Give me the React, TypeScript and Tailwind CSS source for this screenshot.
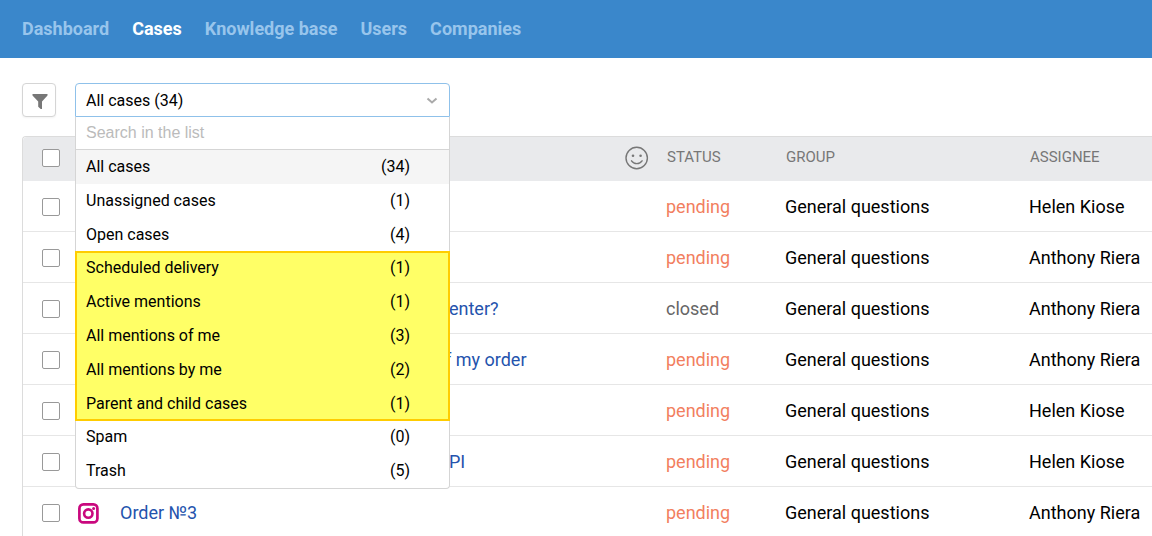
import { useState } from "react";
import clsx from "clsx";

const NAV = ["Dashboard", "Cases", "Knowledge base", "Users", "Companies"];

type Filter = { label: string; count: number };

const MAIN_FILTERS: Filter[] = [
  { label: "All cases", count: 34 },
  { label: "Unassigned cases", count: 1 },
  { label: "Open cases", count: 4 },
];

const MARKED_FILTERS: Filter[] = [
  { label: "Scheduled delivery", count: 1 },
  { label: "Active mentions", count: 1 },
  { label: "All mentions of me", count: 3 },
  { label: "All mentions by me", count: 2 },
  { label: "Parent and child cases", count: 1 },
];

const OTHER_FILTERS: Filter[] = [
  { label: "Spam", count: 0 },
  { label: "Trash", count: 5 },
];

type Case = { subject: string; indent?: string; status: "pending" | "closed"; assignee: string; instagram?: boolean };

const CASES: Case[] = [
  { subject: "", status: "pending", assignee: "Helen Kiose" },
  { subject: "", status: "pending", assignee: "Anthony Riera" },
  { subject: "enter?", indent: "pl-[329px]", status: "closed", assignee: "Anthony Riera" },
  { subject: "f my order", indent: "pl-[325px]", status: "pending", assignee: "Anthony Riera" },
  { subject: "", status: "pending", assignee: "Helen Kiose" },
  { subject: "PI", indent: "pl-[329px]", status: "pending", assignee: "Helen Kiose" },
  { subject: "Order №3", status: "pending", assignee: "Anthony Riera", instagram: true },
];

function FunnelIcon() {
  return (
    <svg viewBox="0 0 16 16" className="h-4 w-4" fill="#777" aria-hidden>
      <path d="M0.500 1h15v1.500L10 8.500V16H8.700L6.200 13.800V8.500L0.500 2.500z" />
    </svg>
  );
}

function ChevronIcon() {
  return (
    <svg viewBox="0 0 12 8" className="h-2 w-3" fill="none" stroke="#aaa" strokeWidth="2" aria-hidden>
      <path d="M1.500 1.500l4.500 4 4.500-4" />
    </svg>
  );
}

function SmileIcon() {
  return (
    <svg viewBox="0 0 24 24" className="h-6 w-6" fill="none" stroke="#777" strokeWidth="1.4" aria-hidden>
      <circle cx="11.700" cy="12" r="10.700" />
      <circle cx="8" cy="9.700" r="1.300" fill="#777" stroke="none" />
      <circle cx="15.600" cy="9.700" r="1.300" fill="#777" stroke="none" />
      <path d="M6.500 14.800c1.200 1.800 3 2.800 5.300 2.800s4.100-1 5.300-2.800" strokeLinecap="round" />
    </svg>
  );
}

function InstagramIcon() {
  return (
    <svg viewBox="0 0 21 21" className="h-[21px] w-[21px]" fill="none" stroke="#c9087e" aria-hidden>
      <rect x="1.400" y="1.400" width="18" height="18" rx="4" strokeWidth="2.700" />
      <circle cx="10.300" cy="10.600" r="4.200" strokeWidth="2.600" />
      <circle cx="15.600" cy="5.400" r="1.500" fill="#c9087e" stroke="none" />
    </svg>
  );
}

function Checkbox({ label }: { label: string }) {
  return (
    <input
      type="checkbox"
      aria-label={label}
      className="block h-[18px] w-[18px] appearance-none rounded-[2px] border border-[#999] bg-white checked:bg-[#3a87cb]"
    />
  );
}

function FilterRow({ filter, active, onSelect }: { filter: Filter; active: boolean; onSelect: (f: Filter) => void }) {
  return (
    <li>
      <button
        type="button"
        onClick={() => onSelect(filter)}
        className={clsx("flex h-[34px] w-full items-center justify-between pr-[39px] pl-[10px] text-left", active && "bg-[#f5f5f5]")}
      >
        <span>{filter.label}</span>
        <span>({filter.count})</span>
      </button>
    </li>
  );
}

function CaseFilter() {
  const [selected, setSelected] = useState(MAIN_FILTERS[0]);
  const rows = (filters: Filter[]) =>
    filters.map((f) => <FilterRow key={f.label} filter={f} active={f.label === selected.label} onSelect={setSelected} />);

  return (
    <div className="relative w-[375px] text-base text-black">
      <button
        type="button"
        aria-expanded="true"
        className="flex h-[34px] w-full items-center justify-between rounded-t border border-[#8fc1ea] bg-white pt-px pr-[11px] pl-[10px]"
      >
        <span>{selected.label} ({selected.count})</span>
        <ChevronIcon />
      </button>
      <div className="absolute top-full left-0 z-10 w-full rounded-b border border-t-0 border-[#d5d5d5] bg-white">
        <input
          type="text"
          aria-label="Search in the list"
          placeholder="Search in the list"
          className="block h-[33px] w-full border-b border-[#d5d5d5] px-[10px] font-['Liberation_Sans',sans-serif] outline-none placeholder:text-[#bbb]"
        />
        <ul>{rows(MAIN_FILTERS)}</ul>
        <ul className="-m-px bg-[#ffff66] px-px inset-ring-2 inset-ring-[#fc0]">{rows(MARKED_FILTERS)}</ul>
        <ul>{rows(OTHER_FILTERS)}</ul>
      </div>
    </div>
  );
}

function CaseTable() {
  return (
    <table className="w-full min-w-[1130px] table-fixed border-separate border-spacing-0 rounded-tl border-t border-l border-[#dcdcdc] text-left text-lg text-black">
      <thead>
        <tr className="h-11 bg-[#e9eaec] text-[15px] text-[#777] *:pb-0.5">
          <th className="w-[55px] rounded-tl pl-[19px]"><Checkbox label="Select all cases" /></th>
          <th className="w-[42px]" />
          <th className="w-[505px]" />
          <th className="w-[41px]"><SmileIcon /></th>
          <th className="w-[119px] pl-px font-normal">STATUS</th>
          <th className="w-[244px] pl-px font-normal">GROUP</th>
          <th className="pl-px font-normal">ASSIGNEE</th>
        </tr>
      </thead>
      <tbody>
        {CASES.map((c, i) => (
          <tr key={i} className="h-[51px] *:border-b *:border-[#e6e6e6] *:pt-0.5">
            <td className="pl-[19px]"><Checkbox label={`Select case ${i + 1}`} /></td>
            <td>{c.instagram && <InstagramIcon />}</td>
            <td className={clsx("whitespace-nowrap", c.indent)}>
              {c.subject && <a href="#case" className="text-[#2453ad]">{c.subject}</a>}
            </td>
            <td />
            <td className={c.status === "pending" ? "text-[#f27f5f]" : "text-[#666]"}>{c.status}</td>
            <td>General questions</td>
            <td className="whitespace-nowrap">{c.assignee}</td>
          </tr>
        ))}
      </tbody>
    </table>
  );
}

export default function App() {
  return (
    <div className="h-screen overflow-hidden bg-white font-[Roboto,sans-serif]">
      <nav className="flex h-[58px] items-center gap-[23px] bg-[#3a87cb] px-[22px] text-lg font-bold" aria-label="Main">
        {NAV.map((item) => (
          <a key={item} href={`#${item}`} className={item === "Cases" ? "text-white" : "text-[#98c5ec]"}>
            {item}
          </a>
        ))}
      </nav>
      <main className="pt-[25px] pl-[22px]">
        <div className="flex gap-[19px]">
          <button
            type="button"
            aria-label="Filter"
            className="flex h-[34px] w-[34px] items-center justify-center rounded border border-[#d5d5d5] bg-white pt-px pl-px shadow-xs"
          >
            <FunnelIcon />
          </button>
          <CaseFilter />
        </div>
        <div className="mt-[19px]">
          <CaseTable />
        </div>
      </main>
    </div>
  );
}
